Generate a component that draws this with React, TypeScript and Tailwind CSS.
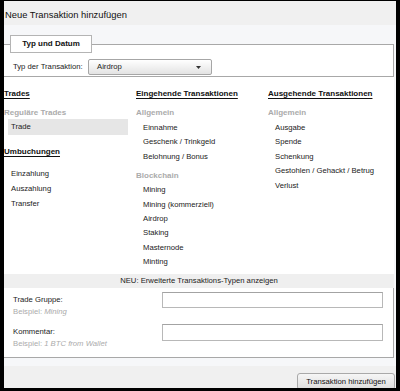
import React from "react";

const font = { fontFamily: '"Liberation Sans", Arial, sans-serif' };

function Item({ children, h = "h-[14.4px] leading-[14.4px]" }: { children: React.ReactNode; h?: string }) {
  return <div className={`${h} pl-[7px] text-[7.7px] text-[#222]`}>{children}</div>;
}

function Heading({ children, className = "" }: { children: React.ReactNode; className?: string }) {
  return (
    <div className={`h-[12px] leading-[12px] text-[8px] font-bold text-[#111] underline underline-offset-[1.5px] ${className}`}>
      {children}
    </div>
  );
}

function Sub({ children, className = "" }: { children: React.ReactNode; className?: string }) {
  return <div className={`h-[12px] leading-[12px] text-[8px] font-bold text-[#ababab] ${className}`}>{children}</div>;
}

export default function App() {
  return (
    <div className="w-[400px] h-[391px] bg-black pt-[1px] pl-[4px] pr-[4px] pb-[3px]" style={font}>
      <div className="w-[392px] h-[387px] bg-[#f6f7f9] flex flex-col overflow-hidden">
        {/* Header */}
        <div className="h-[24px] shrink-0 bg-[#f0f0f0] pl-[1px] pt-[4px]">
          <div className="h-[20px] leading-[20px] text-[9.4px] text-[#111]">Neue Transaktion hinzufügen</div>
        </div>

        {/* Fieldset 1 */}
        <div className="pt-[10px] shrink-0">
          <div className="relative z-10 ml-[6px] w-[82px] h-[18px] -mb-[9px] bg-white border border-[#b4b4b4] flex items-center justify-center text-[8px] font-bold text-[#111]">
            Typ und Datum
          </div>
          <div className="w-[390px] h-[33px] bg-white border-t border-b border-r border-[#a8a8a8] pt-[14px] pl-[9px] flex items-start">
            <div className="w-[75px] h-[16px] leading-[16px] text-[7.7px] text-[#222]">Typ der Transaktion:</div>
            <div className="w-[124px] h-[16px] rounded-[2px] border border-[#a6a6a6] bg-gradient-to-b from-[#ffffff] to-[#e3e3e3] flex items-center justify-between pl-[8px] pr-[10px]">
              <span className="text-[7.7px] text-[#222]">Airdrop</span>
              <svg width="5" height="3" viewBox="0 0 5 3">
                <path d="M0 0 H5 L2.5 3 Z" fill="#333" />
              </svg>
            </div>
          </div>
        </div>

        {/* Columns */}
        <div className="w-[390px] h-[197px] shrink-0 bg-white pt-[11px] grid grid-cols-[132px_132px_126px]">
          <div className="flex flex-col">
            <Heading>Trades</Heading>
            <Sub className="mt-[7px]">Reguläre Trades</Sub>
            <div className="ml-[4px] w-[120px] h-[16px] leading-[16px] pl-[3px] bg-[#e6e6e6] text-[7.7px] text-[#222]">Trade</div>
            <Heading className="mt-[11px]">Umbuchungen</Heading>
            <div className="mt-[8px]">
              <Item h="h-[15px] leading-[15px]">Einzahlung</Item>
              <Item h="h-[15px] leading-[15px]">Auszahlung</Item>
              <Item h="h-[15px] leading-[15px]">Transfer</Item>
            </div>
          </div>
          <div className="flex flex-col">
            <Heading>Eingehende Transaktionen</Heading>
            <Sub className="mt-[7px]">Allgemein</Sub>
            <div className="mt-[2px]">
              <Item>Einnahme</Item>
              <Item>Geschenk / Trinkgeld</Item>
              <Item>Belohnung / Bonus</Item>
            </div>
            <Sub className="mt-[6px]">Blockchain</Sub>
            <div className="mt-[1px]">
              <Item>Mining</Item>
              <Item>Mining (kommerziell)</Item>
              <Item>Airdrop</Item>
              <Item>Staking</Item>
              <Item>Masternode</Item>
              <Item>Minting</Item>
            </div>
          </div>
          <div className="flex flex-col">
            <Heading>Ausgehende Transaktionen</Heading>
            <Sub className="mt-[7px]">Allgemein</Sub>
            <div className="mt-[2px]">
              <Item>Ausgabe</Item>
              <Item>Spende</Item>
              <Item>Schenkung</Item>
              <Item>Gestohlen / Gehackt / Betrug</Item>
              <Item>Verlust</Item>
            </div>
          </div>
        </div>

        {/* NEU band */}
        <div className="w-[390px] h-[14px] shrink-0 bg-[#efefef] leading-[14px] text-center text-[7.7px] text-[#222]">
          NEU: Erweiterte Transaktions-Typen anzeigen
        </div>

        {/* Fieldset 2 */}
        <div className="w-[390px] h-[70px] shrink-0 bg-white border-r border-b border-[#a8a8a8] pt-[4px] pl-[9px] pr-[10px] flex flex-col gap-[7px]">
          <div className="flex items-start h-[25px]">
            <div className="w-[149px] pt-[2px]">
              <div className="h-[12px] leading-[12px] text-[7.7px] text-[#222]">Trade Gruppe:</div>
              <div className="h-[11px] leading-[11px] text-[7.7px] text-[#ababab]">
                Beispiel: <span className="italic">Mining</span>
              </div>
            </div>
            <div className="w-[221px] h-[16px] bg-white border border-[#b8b8b8] border-t-[#a3a3a3]" />
          </div>
          <div className="flex items-start h-[25px]">
            <div className="w-[149px] pt-[2px]">
              <div className="h-[12px] leading-[12px] text-[7.7px] text-[#222]">Kommentar:</div>
              <div className="h-[11px] leading-[11px] text-[7.7px] text-[#ababab]">
                Beispiel: <span className="italic">1 BTC from Wallet</span>
              </div>
            </div>
            <div className="w-[221px] h-[17px] bg-white border border-[#b8b8b8] border-t-[#a3a3a3]" />
          </div>
        </div>

        {/* light gap */}
        <div className="h-[8px] shrink-0" />

        {/* Footer */}
        <div className="flex-1 bg-[#f0f0f0] pt-[7px] flex justify-end pr-[1px]">
          <div className="w-[98px] h-[17px] rounded-[3px] border border-[#a9a9a9] bg-gradient-to-b from-[#f6f6f6] to-[#dedede] flex items-center justify-center text-[7.7px] text-[#111]">
            Transaktion hinzufügen
          </div>
        </div>
      </div>
    </div>
  );
}
